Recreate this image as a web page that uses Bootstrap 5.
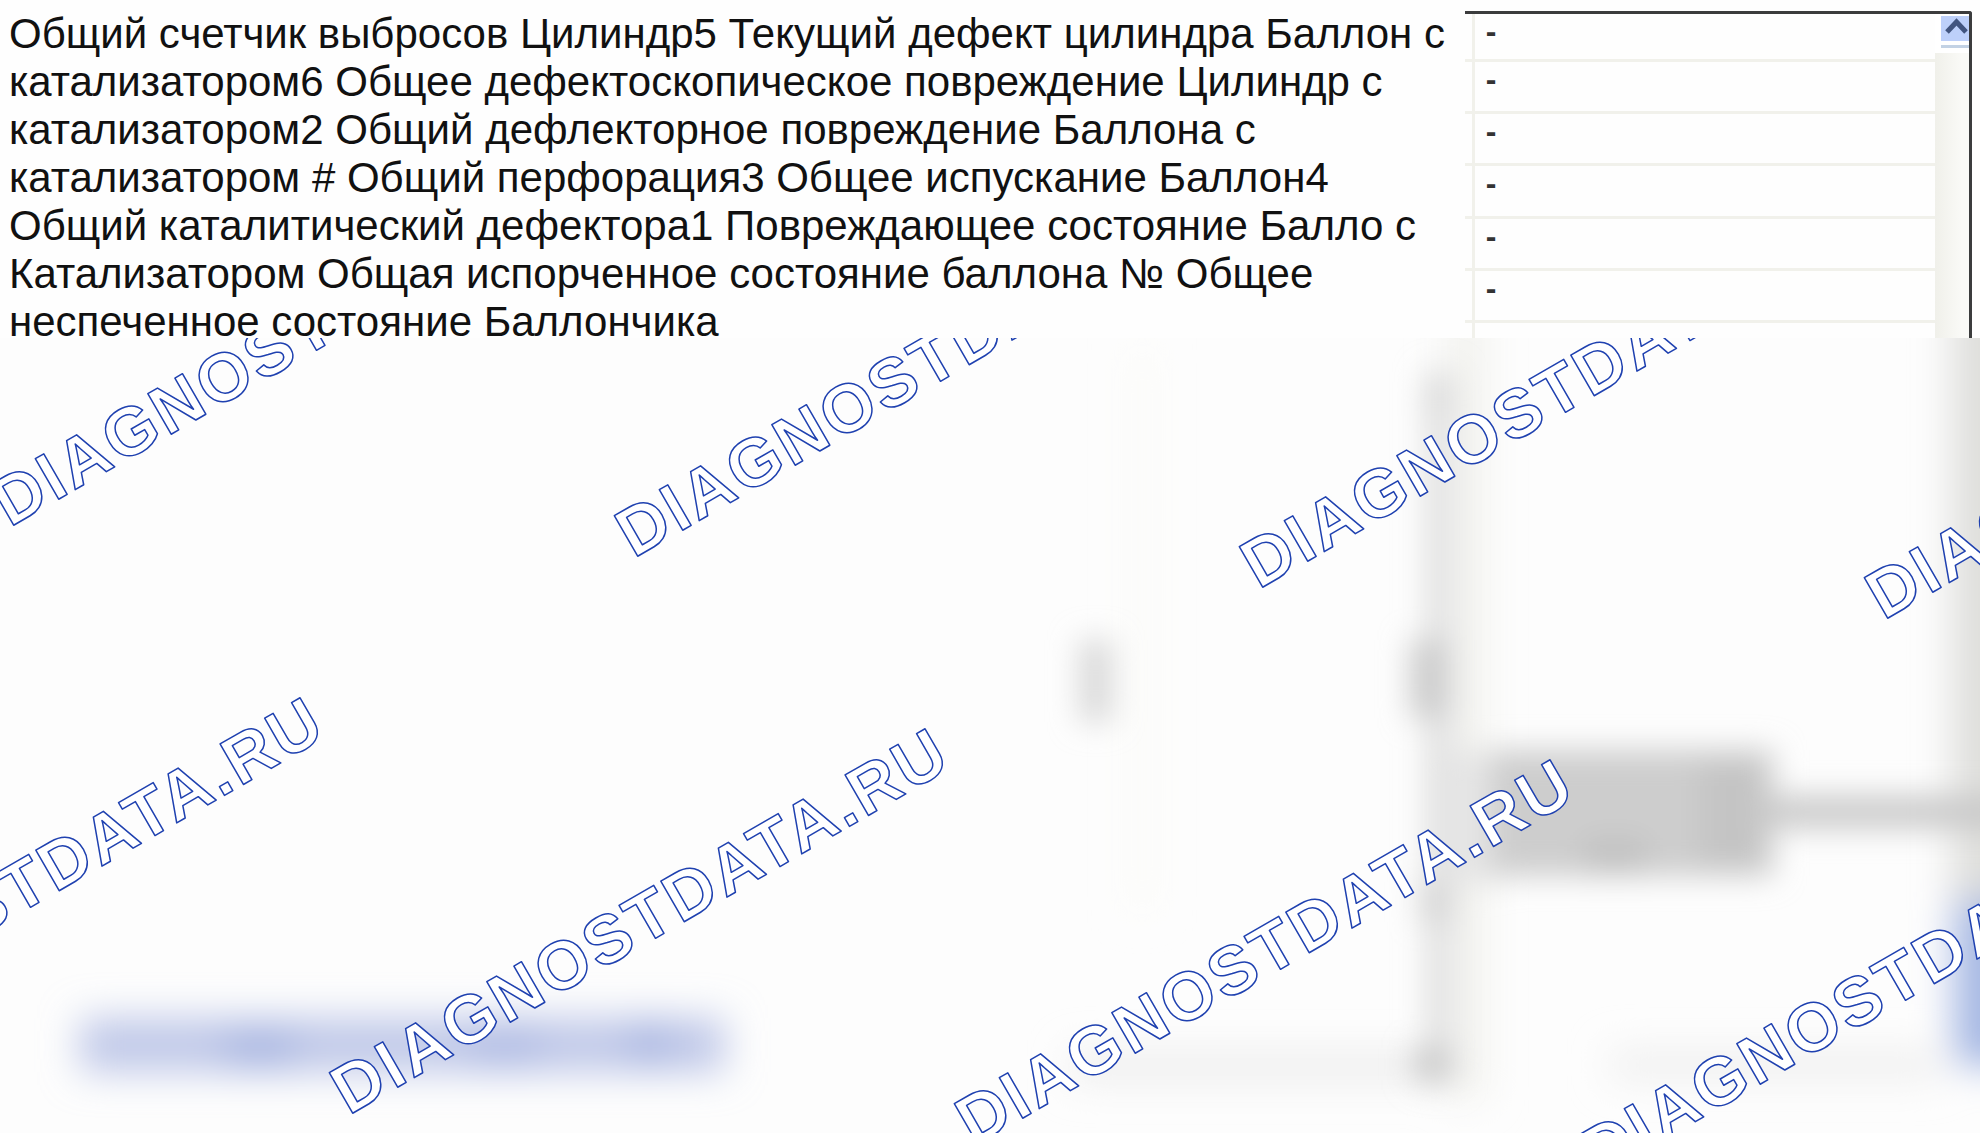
<!DOCTYPE html>
<html lang="ru">
<head>
<meta charset="utf-8">
<meta name="viewport" content="width=device-width, initial-scale=1">
<title>DIAGNOSTDATA.RU</title>
<link href="https://cdn.jsdelivr.net/npm/bootstrap@5.3.0/dist/css/bootstrap.min.css" rel="stylesheet">
<style>
  body { font-family: "Liberation Sans", Arial, sans-serif; background: #fefefe; color: #111; }
  .caption-text { font-size: 42px; line-height: 48px; padding: 10px 0 0 9px; }
  .grid-pane { width: 26%; padding-top: 11px; padding-right: 8px; }
  .grid-frame { border-top: 3px solid #3b3c3d; border-right: 3px solid #3b3c3d; border-top-right-radius: 3px; }
  .value-grid { border-collapse: collapse; }
  .value-grid tr { height: 52px; }
  .value-grid tr:first-child { height: 46px; }
  .value-grid tr:last-child { height: 24px; }
  .value-grid td { padding: 0; border-bottom: 3px solid #f1f1eb; font-size: 32px; font-weight: 700; line-height: 34px; vertical-align: top; }
  .value-grid td:first-child { width: 8px; border-right: 3px solid #f1f1eb; }
  .value-grid td:last-child { padding-left: 11px; }
  .value-grid .dash { display: block; height: 34px; color: #333; }
  .value-grid tr:last-child td { border-bottom: 0; }
  .scroll-track { width: 34px; background: linear-gradient(90deg, #f0f0ea, #fafaf7 80%); }
  .scroll-head { background: #fff; padding: 2px 0 5px 6px; }
  .scroll-up { display: block; width: 28px; height: 25px; background: #bdd0fa; }
  .scroll-line { height: 3px; margin-top: 4px; background: #c3d2e4; }
  .backdrop { min-height: 600px; margin-top: -8px; background: #fdfdfd; }
  .watermark text { font: bold 68px "Liberation Sans", Arial, sans-serif; letter-spacing: 3px; fill: #fff; stroke: #1f41b0; stroke-width: 1.5px; stroke-linejoin: round; }
</style>
<script src="https://cdn.jsdelivr.net/npm/bootstrap@5.3.0/dist/js/bootstrap.bundle.min.js"></script>
</head>
<body class="overflow-hidden">
<main class="d-flex flex-column vh-100">
  <section class="d-flex align-items-stretch">
    <p class="caption-text flex-grow-1 mb-0">Общий счетчик выбросов Цилиндр5 Текущий дефект цилиндра Баллон с катализатором6 Общее дефектоскопическое повреждение Цилиндр с катализатором2 Общий дефлекторное повреждение Баллона с катализатором # Общий перфорация3 Общее испускание Баллон4 Общий каталитический дефектора1 Повреждающее состояние Балло с Катализатором Общая испорченное состояние баллона № Общее неспеченное состояние Баллончика</p>
    <div class="grid-pane d-flex flex-shrink-0">
      <div class="grid-frame d-flex flex-grow-1">
        <table class="value-grid flex-grow-1">
          <tbody>
            <tr><td></td><td><span class="dash">-</span></td></tr>
            <tr><td></td><td><span class="dash">-</span></td></tr>
            <tr><td></td><td><span class="dash">-</span></td></tr>
            <tr><td></td><td><span class="dash">-</span></td></tr>
            <tr><td></td><td><span class="dash">-</span></td></tr>
            <tr><td></td><td><span class="dash">-</span></td></tr>
            <tr><td></td><td></td></tr>
          </tbody>
        </table>
        <div class="scroll-track">
          <div class="scroll-head">
            <button type="button" class="scroll-up border-0 p-0" aria-label="Вверх">
              <svg class="d-block" width="28" height="25" viewBox="0 0 28 25" aria-hidden="true"><path d="M6 16 L15.500 6 L25 16" fill="none" stroke="#42557f" stroke-width="5"/></svg>
            </button>
            <div class="scroll-line"></div>
          </div>
        </div>
      </div>
    </div>
  </section>

  <section class="backdrop position-relative flex-grow-1 overflow-hidden">
    <svg class="position-absolute top-0 start-0 w-100 h-100" viewBox="0 338 1980 795" preserveAspectRatio="xMinYMin slice">
      <defs>
        <filter id="soft" filterUnits="userSpaceOnUse" x="-60" y="250" width="2140" height="980"><feGaussianBlur stdDeviation="19"/></filter>
        <filter id="fine" filterUnits="userSpaceOnUse" x="-60" y="250" width="2140" height="980"><feGaussianBlur stdDeviation="15"/></filter>
      </defs>
      <g filter="url(#soft)">
        <rect x="1446" y="300" width="40" height="800" fill="#f2f2ee"/>
        <rect x="1130" y="350" width="24" height="560" fill="#fbfbf8"/>
        <rect x="1952" y="290" width="90" height="620" fill="#dededb"/>
        <rect x="1070" y="1052" width="370" height="30" fill="#ededed"/>
        <rect x="1610" y="1050" width="330" height="30" fill="#efefef"/>
        <rect x="80" y="1018" width="645" height="54" fill="#bfc8e8"/>
        <rect x="225" y="1032" width="70" height="34" fill="#a5b3e0"/>
        <rect x="470" y="1030" width="70" height="34" fill="#adb9e3"/>
        <rect x="630" y="1022" width="40" height="40" fill="#a8b5e1"/>
        <rect x="1954" y="900" width="90" height="166" fill="#a6b8e3"/>
      </g>
      <g filter="url(#fine)">
        <rect x="1425" y="372" width="30" height="712" fill="#e2e2e2"/>
        <rect x="1425" y="372" width="26" height="44" fill="#dadada"/>
        <rect x="1410" y="640" width="38" height="78" fill="#cccccc"/>
        <rect x="1420" y="882" width="32" height="40" fill="#d4d4d4"/>
        <rect x="1414" y="1048" width="36" height="32" fill="#c8c8c8"/>
        <rect x="1080" y="640" width="32" height="82" fill="#d8d8d8"/>
        <rect x="1450" y="752" width="50" height="130" fill="#e6e6e6"/>
        <rect x="1490" y="750" width="284" height="126" fill="#cdcdcd"/>
        <rect x="1585" y="840" width="60" height="32" fill="#c0c0c0"/>
        <rect x="1700" y="760" width="62" height="106" fill="#c4c4c4"/>
        <rect x="1774" y="796" width="240" height="32" fill="#c8c8c8"/>
      </g>
      <g class="watermark">
        <text transform="translate(14 525) rotate(-30)" x="-5">DIAGNOSTDATA.RU</text>
        <text transform="translate(638 556) rotate(-30)" x="-5">DIAGNOSTDATA.RU</text>
        <text transform="translate(1263 587) rotate(-30)" x="-5">DIAGNOSTDATA.RU</text>
        <text transform="translate(1888 618) rotate(-30)" x="-5">DIAGNOSTDATA.RU</text>
        <text transform="translate(-272 1082) rotate(-30)" x="-5">DIAGNOSTDATA.RU</text>
        <text transform="translate(353 1113) rotate(-30)" x="-5">DIAGNOSTDATA.RU</text>
        <text transform="translate(978 1144) rotate(-30)" x="-5">DIAGNOSTDATA.RU</text>
        <text transform="translate(1603 1175) rotate(-30)" x="-5">DIAGNOSTDATA.RU</text>
      </g>
    </svg>
  </section>
</main>
</body>
</html>
